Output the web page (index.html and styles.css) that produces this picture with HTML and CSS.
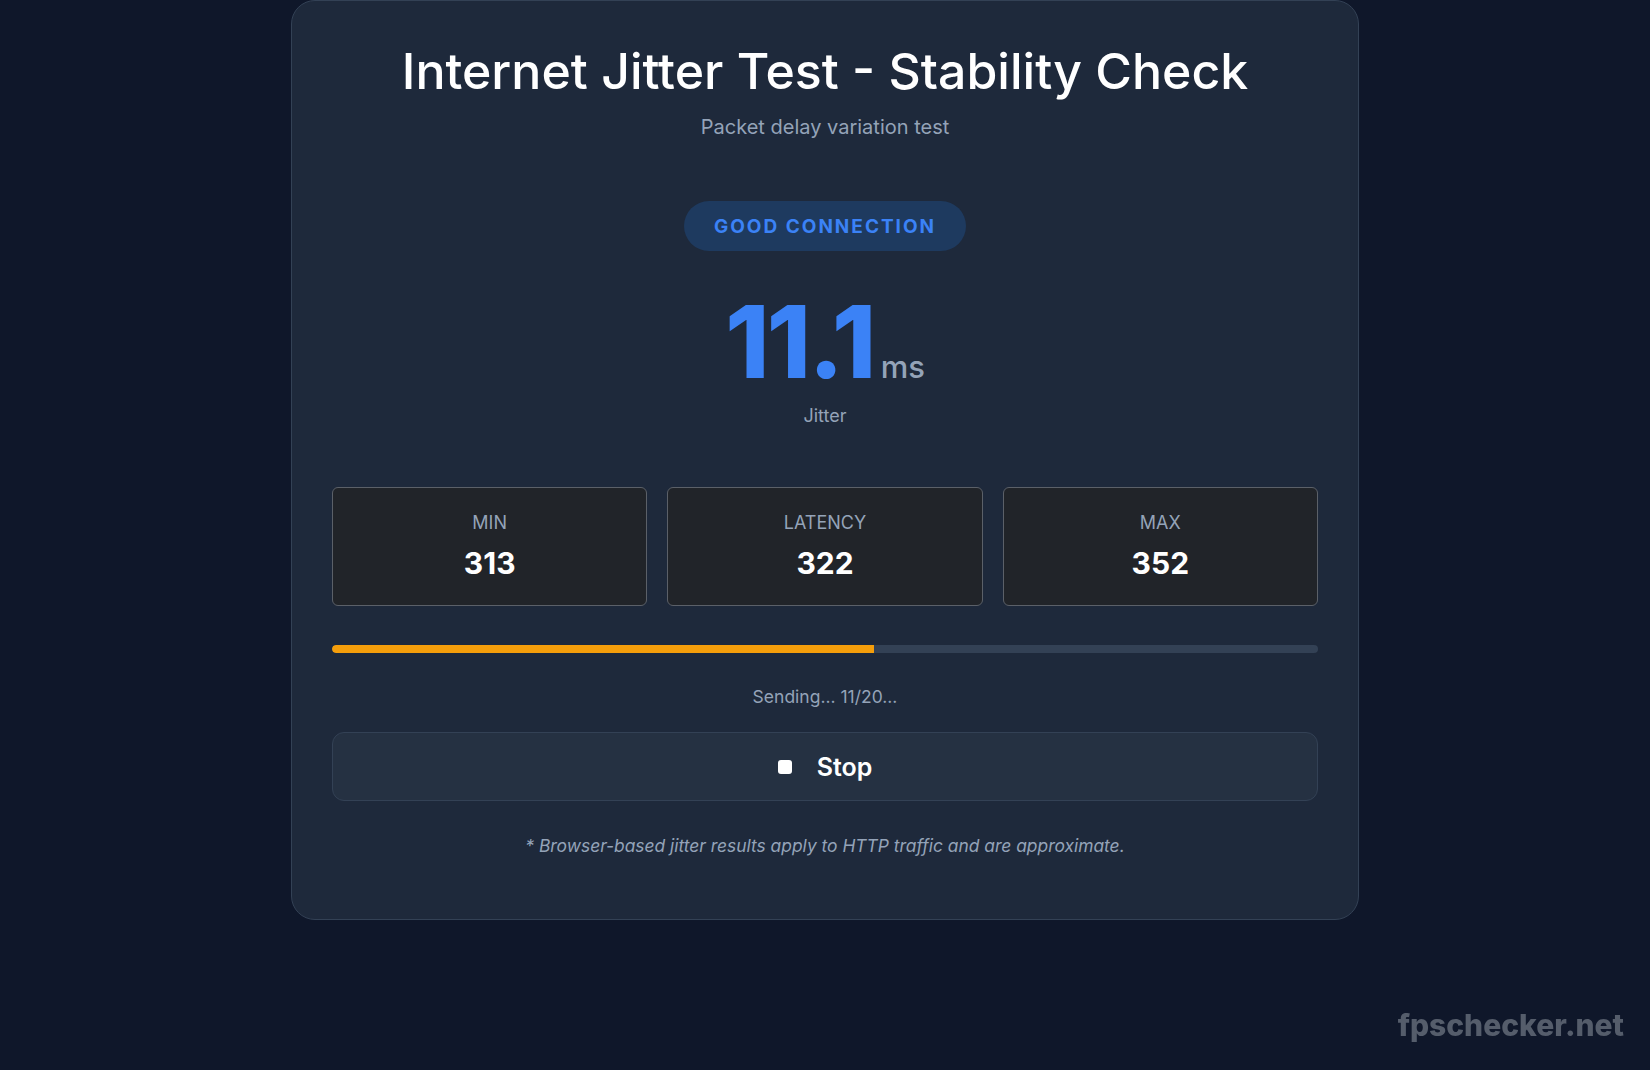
FILE: index.html
```html
<!DOCTYPE html>
<html lang="en">
<head>
<meta charset="utf-8">
<title>Internet Jitter Test - Stability Check</title>
<link rel="stylesheet" href="styles.css">
</head>
<body>
<main class="card">
  <h1 class="title">Internet Jitter Test - Stability Check</h1>
  <p class="subtitle">Packet delay variation test</p>
  <div class="badge-row"><span class="badge">GOOD CONNECTION</span></div>
  <div class="reading"><span class="value">11.1</span><span class="unit">ms</span></div>
  <div class="reading-label">Jitter</div>
  <div class="stats">
    <div class="stat"><div class="stat-label">MIN</div><div class="stat-value">313</div></div>
    <div class="stat"><div class="stat-label">LATENCY</div><div class="stat-value">322</div></div>
    <div class="stat"><div class="stat-label">MAX</div><div class="stat-value">352</div></div>
  </div>
  <div class="progress"><div class="progress-fill" style="width:55%"></div></div>
  <div class="status">Sending... 11/20...</div>
  <button class="stop-btn" type="button"><span class="stop-icon"></span><span>Stop</span></button>
  <p class="note">* Browser-based jitter results apply to HTTP traffic and are approximate.</p>
</main>
<div class="watermark">fpschecker.net</div>
</body>
</html>
```
FILE: styles.css
```css
* { box-sizing: border-box; }
html, body { margin: 0; padding: 0; }
body {
  background: #0f172a;
  font-family: Inter, "Noto Sans", "Liberation Sans", sans-serif;
  color: #f8fafc;
  min-height: 1070px;
}
.card {
  width: 1068px;
  margin: 0 auto;
  background: #1e293b;
  border: 1px solid #334155;
  border-radius: 24px;
  padding: 39px 40px 61px;
  text-align: center;
}
.title {
  margin: 0;
  font-size: 50px;
  line-height: 62px;
  font-weight: 500;
  color: #ffffff;
}
.subtitle {
  margin: 13px 0 0;
  font-size: 20px;
  line-height: 24px;
  color: #94a3b8;
}
.badge-row { margin-top: 62px; display: flex; justify-content: center; }
.badge {
  display: inline-block;
  height: 50px;
  line-height: 51px;
  padding: 0 30px;
  border-radius: 25px;
  background: #1e3a5f;
  color: #3b82f6;
  font-size: 19px;
  font-weight: 700;
  letter-spacing: 2px;
}
.reading {
  margin-top: 41px;
  display: flex;
  justify-content: center;
  align-items: baseline;
  height: 100px;
}
.value {
  font-size: 100px;
  line-height: 100px;
  font-weight: 800;
  color: #3b82f6;
  letter-spacing: -2.5px;
}
.unit {
  font-size: 31px;
  line-height: 32px;
  font-weight: 500;
  color: #94a3b8;
  margin-left: 7px;
}
.reading-label {
  margin-top: 12px;
  font-size: 18px;
  line-height: 24px;
  color: #94a3b8;
}
.stats {
  margin-top: 59px;
  display: grid;
  grid-template-columns: repeat(3, 1fr);
  gap: 20px;
}
.stat {
  background: #212429;
  border: 1px solid #5b6068;
  border-radius: 6px;
  padding: 23px 10px 24px;
}
.stat-label {
  font-size: 18px;
  line-height: 24px;
  color: #94a3b8;
}
.stat-value {
  margin-top: 10px;
  font-size: 30px;
  line-height: 36px;
  font-weight: 700;
  color: #ffffff;
}
.progress {
  margin-top: 39px;
  height: 8px;
  border-radius: 4px;
  background: #334155;
  overflow: hidden;
}
.progress-fill {
  height: 100%;
  background: #f59e0b;
  border-radius: 4px 0 0 4px;
}
.status {
  margin-top: 32px;
  font-size: 17.5px;
  line-height: 24px;
  color: #94a3b8;
}
.stop-btn {
  margin-top: 23px;
  width: 100%;
  height: 69px;
  display: flex;
  align-items: center;
  justify-content: center;
  gap: 25px;
  background: #253142;
  border: 1px solid #334155;
  border-radius: 12px;
  color: #ffffff;
  font-family: inherit;
  font-size: 25px;
  font-weight: 600;
}
.stop-icon {
  width: 14px;
  height: 14px;
  background: #ffffff;
  border-radius: 3px;
}
.note {
  margin: 33px 0 0;
  font-size: 17.4px;
  line-height: 24px;
  font-style: italic;
  color: #94a3b8;
}
.watermark {
  position: fixed;
  right: 26px;
  bottom: 27px;
  font-size: 30px;
  font-weight: 800;
  color: #555d6b;
  line-height: 36px;
}
```
